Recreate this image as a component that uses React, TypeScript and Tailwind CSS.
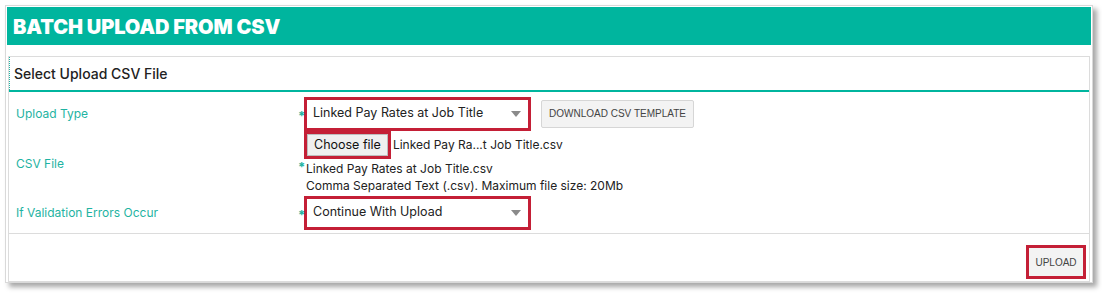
import React from "react";

const Caret = () => (
  <svg width="10" height="6" viewBox="0 0 10 6" className="shrink-0">
    <path d="M0 0 L10 0 L5 6 Z" fill="#8a8a8a" />
  </svg>
);

function SelectBox({ value }: { value: string }) {
  return (
    <div className="border-[3px] border-[#c41f36] w-[227px] h-[34px] bg-white flex items-center pl-[6px] pr-[7px]">
      <span className="flex-1 text-[12.5px] text-[#222]">{value}</span>
      <Caret />
    </div>
  );
}

function Star() {
  return <span className="text-[#1fb3a2] text-[13px] font-bold w-[7px] leading-none translate-y-[3px] pl-[1px]">*</span>;
}

export default function App() {
  return (
    <div className="w-[1102px] h-[293px] bg-white pt-[5px] pl-[5px]" style={{ fontFamily: "Inter, 'Noto Sans', sans-serif" }}>
      <div className="w-[1088px] h-[278px] border border-[#d9d9d9] bg-white p-px shadow-[4px_4px_5px_rgba(0,0,0,0.35)]">
        <div className="h-[38px] bg-[#00b59e] flex items-center pl-[6px] pt-[2px]">
          <h1 className="text-white text-[20px] font-black tracking-[-0.1px] leading-none">BATCH UPLOAD FROM CSV</h1>
        </div>
        <div className="mt-[11px] mx-px border border-[#dcdcdc] h-[226px] flex flex-col">
          <div className="h-[33px] flex items-center pl-[4px] border-l border-dotted border-l-[#1fb3a2] text-[14px] text-[#222] font-medium">
            Select Upload CSV File
          </div>
          <div className="h-[2px] bg-[#00b59e]" />
          <div className="grid grid-cols-[288px_1fr] border-b border-[#dcdcdc] pt-[4px] pb-[3px] text-[12px]">
            <div className="flex items-center pl-[7px] text-[#1fb3a2] h-[35px]">Upload Type</div>
            <div className="flex items-center h-[35px]">
              <Star />
              <SelectBox value="Linked Pay Rates at Job Title" />
              <button className="ml-[10px] h-[28px] w-[153px] bg-[#f3f3f3] border border-[#d6d6d6] rounded-[2px] text-[10px] text-[#444]" style={{ fontFamily: "'Liberation Sans', Arial, sans-serif" }}>
                DOWNLOAD CSV TEMPLATE
              </button>
            </div>

            <div className="flex items-center pl-[7px] text-[#1fb3a2]">CSV File</div>
            <div className="flex items-center">
              <Star />
              <div className="flex flex-col text-[#222] pb-[3px]">
                <div className="flex items-center">
                  <div className="border-[3px] border-[#c41f36] h-[28px] flex">
                    <div className="bg-[#efefef] border border-[#bdbdbd] px-[6px] flex items-center text-[12.5px] text-[#111]">Choose file</div>
                  </div>
                  <span className="ml-[2px] text-[12px]">Linked Pay Ra...t Job Title.csv</span>
                </div>
                <div className="mt-[1px] pl-[2px] leading-[17px]">Linked Pay Rates at Job Title.csv</div>
                <div className="pl-[2px] leading-[17px]">Comma Separated Text (.csv). Maximum file size: 20Mb</div>
              </div>
            </div>

            <div className="flex items-center pl-[7px] text-[#1fb3a2] h-[35px] -mt-[2px]">If Validation Errors Occur</div>
            <div className="flex items-center h-[35px] -mt-[2px]">
              <Star />
              <SelectBox value="Continue With Upload" />
            </div>
          </div>
          <div className="flex-1 flex justify-end items-end pb-[2px] pr-[3px]">
            <div className="border-[3px] border-[#c41f36] h-[34px] w-[60px] flex">
              <button className="flex-1 bg-[#f3f3f3] text-[10px] text-[#444]" style={{ fontFamily: "'Liberation Sans', Arial, sans-serif" }}>
                UPLOAD
              </button>
            </div>
          </div>
        </div>
      </div>
    </div>
  );
}
